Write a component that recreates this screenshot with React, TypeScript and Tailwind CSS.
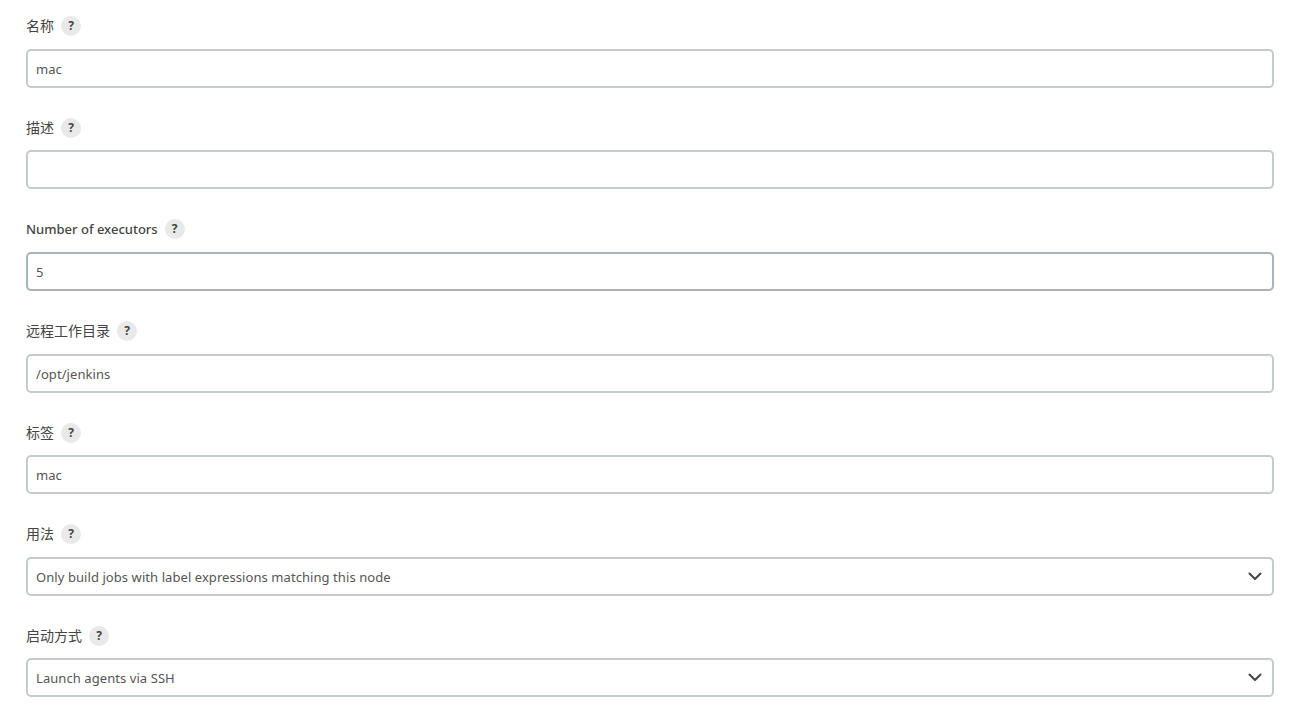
const font = "font-['Noto_Sans','Noto_Sans_CJK_SC',sans-serif]";

function Field({ label, value, select, dark, bold }: { label: string; value?: string; select?: boolean; dark?: boolean; bold?: boolean }) {
  return (
    <div className="flex flex-col">
      <div className="flex h-[20px] items-center gap-[7px]">
        <span className={`leading-[20px] text-[#444] ${bold ? "text-[13px] font-medium" : "text-[14px]"}`}>{label}</span>
        <span className="flex h-[20px] w-[20px] items-center justify-center rounded-full bg-[#e9e9e9] text-[12px] font-bold text-[#444]">?</span>
      </div>
      <div className={`mt-[12.6px] flex h-[39px] items-center justify-between rounded-[5px] border-2 bg-white pl-[8px] pr-[10px] pt-[2.5px] text-[13px] tracking-[0.07px] text-[#555] ${dark ? "border-[#a9b4b8]" : "border-[#c4cbcc]"}`}>
        <span>{value}</span>
        {select && (
          <svg className="-mt-[2.5px]" width="14" height="9" viewBox="0 0 14 9" fill="none" stroke="#444" strokeWidth="2" strokeLinecap="round" strokeLinejoin="round">
            <path d="M1.5 1.5 7 7l5.5-5.5" />
          </svg>
        )}
      </div>
    </div>
  );
}

export default function App() {
  return (
    <div className={`${font} flex h-[713px] flex-col gap-[30px] overflow-hidden bg-white pl-[26px] pr-[29px] pt-[16.2px]`}>
      <Field label="名称" value="mac" />
      <Field label="描述" />
      <Field label="Number of executors" value="5" dark bold />
      <Field label="远程工作目录" value="/opt/jenkins" />
      <Field label="标签" value="mac" />
      <Field label="用法" value="Only build jobs with label expressions matching this node" select />
      <Field label="启动方式" value="Launch agents via SSH" select />
    </div>
  );
}
